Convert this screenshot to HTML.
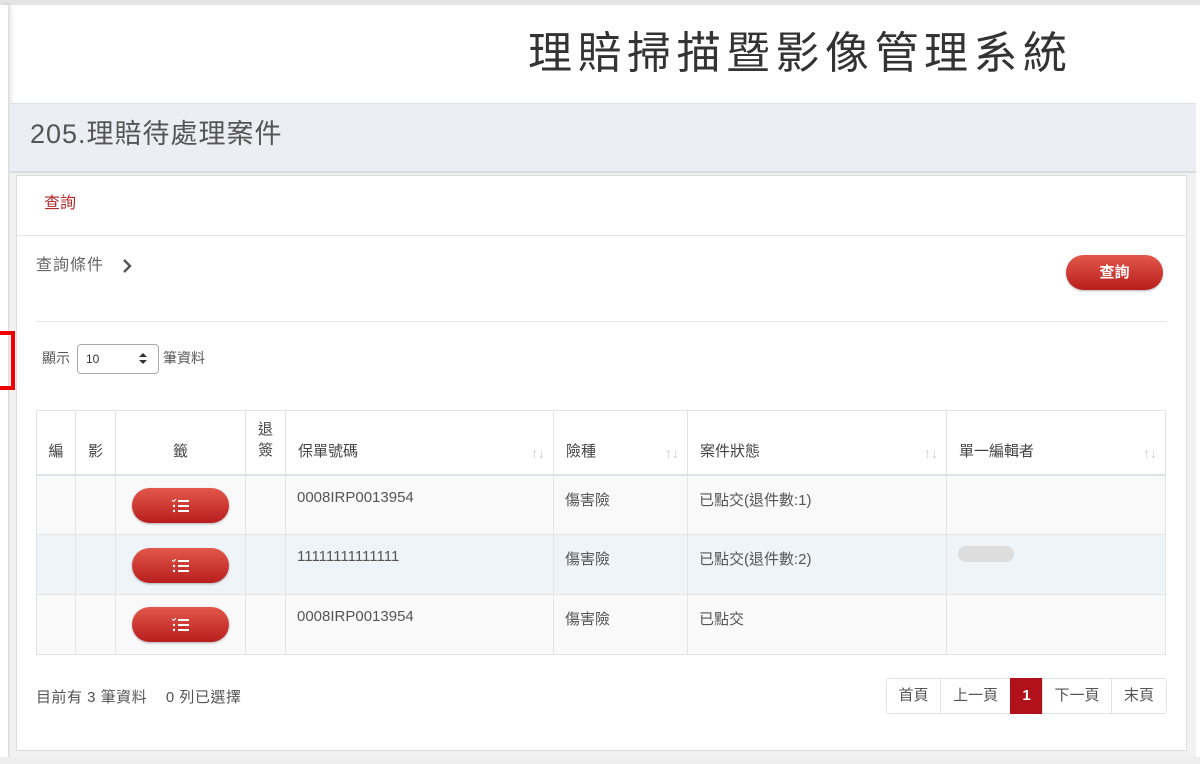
<!DOCTYPE html>
<html><head><meta charset="utf-8"><style>
*{box-sizing:border-box;margin:0;padding:0}
body{width:1200px;height:764px;background:#fff;position:relative;overflow:hidden;font-family:"Liberation Sans","Noto Sans CJK TC",sans-serif;color:#555}
.abs{position:absolute}
.btn{position:absolute;border-radius:18px;background:linear-gradient(#e2584a,#b81e1e);box-shadow:0 1px 2px rgba(0,0,0,.3);color:#fff;text-align:center}
table{border-collapse:collapse;position:absolute;left:36px;top:410px;width:1130px;font-size:15px;color:#555}
td,th{border:1px solid #e2e5e8;font-weight:normal}
th{height:64px;text-align:left;padding:0 12px;color:#444;font-size:15px;vertical-align:bottom;padding-bottom:13px;position:relative;border-bottom:2px solid #dde1e5}
th .s{position:absolute;right:8px;bottom:13px;color:#ccc;font-size:14px}
td{height:60px;vertical-align:top;padding:13px 11px}
tr.a td{background:#f9f9f9}
tr.b td{background:#eff4f8}
.pg{position:absolute;top:678px;height:36px;border:1px solid #e3e3e3;font-size:15px;color:#555;line-height:34px;text-align:center}
</style></head><body>
<div class="abs" style="left:0;top:0;width:1200px;height:5px;background:#e5e5e5"></div>
<div class="abs" style="left:0;top:5px;width:9px;height:759px;background:#fff;border-right:1px solid #ddd;box-shadow:2px 0 4px rgba(0,0,0,.12)"></div>
<div class="abs" style="left:528px;top:26px;font-size:44px;color:#333;letter-spacing:5.5px;line-height:56px;white-space:nowrap">理賠掃描暨影像管理系統</div>
<div class="abs" style="left:10px;top:103px;width:1186px;height:70px;background:#ebeff3;border-top:1px solid #dde2e7;border-bottom:2px solid #d8dce0"></div>
<div class="abs" style="left:30px;top:117px;font-size:27px;color:#555;line-height:34px;letter-spacing:1px">205.理賠待處理案件</div>
<div class="abs" style="left:10px;top:173px;width:1186px;height:585px;background:#f2f2f2"></div>
<div class="abs" style="left:16px;top:175px;width:1171px;height:576px;background:#fff;border:1px solid #ddd"></div>
<div class="abs" style="left:44px;top:193px;font-size:16px;color:#b02a2a;line-height:22px">查詢</div>
<div class="abs" style="left:17px;top:235px;width:1169px;height:1px;background:#e5e5e5"></div>
<div class="abs" style="left:36px;top:256px;font-size:16px;color:#666;line-height:20px;letter-spacing:1px">查詢條件</div>
<svg class="abs" style="left:121px;top:258px" width="12" height="16"><path d="M3 2l6 6-6 6" stroke="#555" stroke-width="2.4" fill="none"/></svg>
<div class="btn" style="left:1066px;top:255px;width:97px;height:35px;line-height:35px;font-size:15px;font-weight:bold">查詢</div>
<div class="abs" style="left:36px;top:321px;width:1130px;height:1px;background:#e5e5e5"></div>
<div class="abs" style="left:42px;top:348px;font-size:14px;color:#555">顯示</div>
<div class="abs" style="left:77px;top:344px;width:82px;height:30px;border:1px solid #aaa;border-radius:4px;font-size:12px;line-height:28px;padding-left:8px;color:#333">10</div>
<svg class="abs" style="left:138px;top:352px" width="10" height="14"><path d="M1 5l4-4 4 4z M1 8l4 4 4-4z" fill="#333"/></svg>
<div class="abs" style="left:163px;top:348px;font-size:14px;color:#555">筆資料</div>
<div class="abs" style="left:0;top:331px;width:15px;height:59px;border:4px solid #e00;border-left:none"></div>
<table>
<tr><th style="width:39px;text-align:center;padding:0 0 13px">編</th><th style="width:40px;text-align:center;padding:0 0 13px">影</th><th style="width:130px;text-align:center">籤</th><th style="width:40px;text-align:center;padding:0 0 13px;line-height:21px">退<br>簽</th><th style="width:268px">保單號碼<span class="s">↑↓</span></th><th style="width:134px">險種<span class="s">↑↓</span></th><th style="width:259px">案件狀態<span class="s">↑↓</span></th><th>單一編輯者<span class="s">↑↓</span></th></tr>
<tr class="a"><td></td><td></td><td></td><td></td><td>0008IRP0013954</td><td>傷害險</td><td>已點交(退件數:1)</td><td></td></tr>
<tr class="b"><td></td><td></td><td></td><td></td><td>11111111111111</td><td>傷害險</td><td>已點交(退件數:2)</td><td><div style="width:56px;height:16px;border-radius:8px;background:#ddd;margin-top:-2px"></div></td></tr>
<tr class="a"><td></td><td></td><td></td><td></td><td>0008IRP0013954</td><td>傷害險</td><td>已點交</td><td></td></tr>
</table>
<div class="btn" style="left:132px;top:488px;width:97px;height:35px"></div>
<div class="btn" style="left:132px;top:548px;width:97px;height:35px"></div>
<div class="btn" style="left:132px;top:607px;width:97px;height:35px"></div>
<svg class="abs" style="left:172px;top:499px" width="18" height="14"><g fill="#fff"><rect x="6" y="1" width="11" height="2"/><rect x="6" y="6" width="11" height="2"/><rect x="6" y="11" width="11" height="2"/><path d="M0 1l1.5 1.5L4 0" stroke="#fff" fill="none"/><circle cx="2" cy="7" r="1.2"/><circle cx="2" cy="12" r="1.2"/></g></svg>
<svg class="abs" style="left:172px;top:559px" width="18" height="14"><g fill="#fff"><rect x="6" y="1" width="11" height="2"/><rect x="6" y="6" width="11" height="2"/><rect x="6" y="11" width="11" height="2"/><path d="M0 1l1.5 1.5L4 0" stroke="#fff" fill="none"/><circle cx="2" cy="7" r="1.2"/><circle cx="2" cy="12" r="1.2"/></g></svg>
<svg class="abs" style="left:172px;top:618px" width="18" height="14"><g fill="#fff"><rect x="6" y="1" width="11" height="2"/><rect x="6" y="6" width="11" height="2"/><rect x="6" y="11" width="11" height="2"/><path d="M0 1l1.5 1.5L4 0" stroke="#fff" fill="none"/><circle cx="2" cy="7" r="1.2"/><circle cx="2" cy="12" r="1.2"/></g></svg>
<div class="abs" style="left:36px;top:689px;font-size:15px;color:#555;line-height:18px;letter-spacing:0.5px">目前有 3 筆資料 &nbsp;&nbsp; 0 列已選擇</div>
<div class="pg" style="left:886px;width:55px;border-radius:3px 0 0 3px">首頁</div>
<div class="pg" style="left:940px;width:71px">上一頁</div>
<div class="pg" style="left:1010px;width:33px;background:#b0111a;border-color:#b0111a;color:#fff;font-weight:bold">1</div>
<div class="pg" style="left:1042px;width:70px">下一頁</div>
<div class="pg" style="left:1111px;width:56px;border-radius:0 3px 3px 0">末頁</div>
<div class="abs" style="left:0;top:757px;width:1200px;height:7px;background:#eee"></div>
</body></html>
